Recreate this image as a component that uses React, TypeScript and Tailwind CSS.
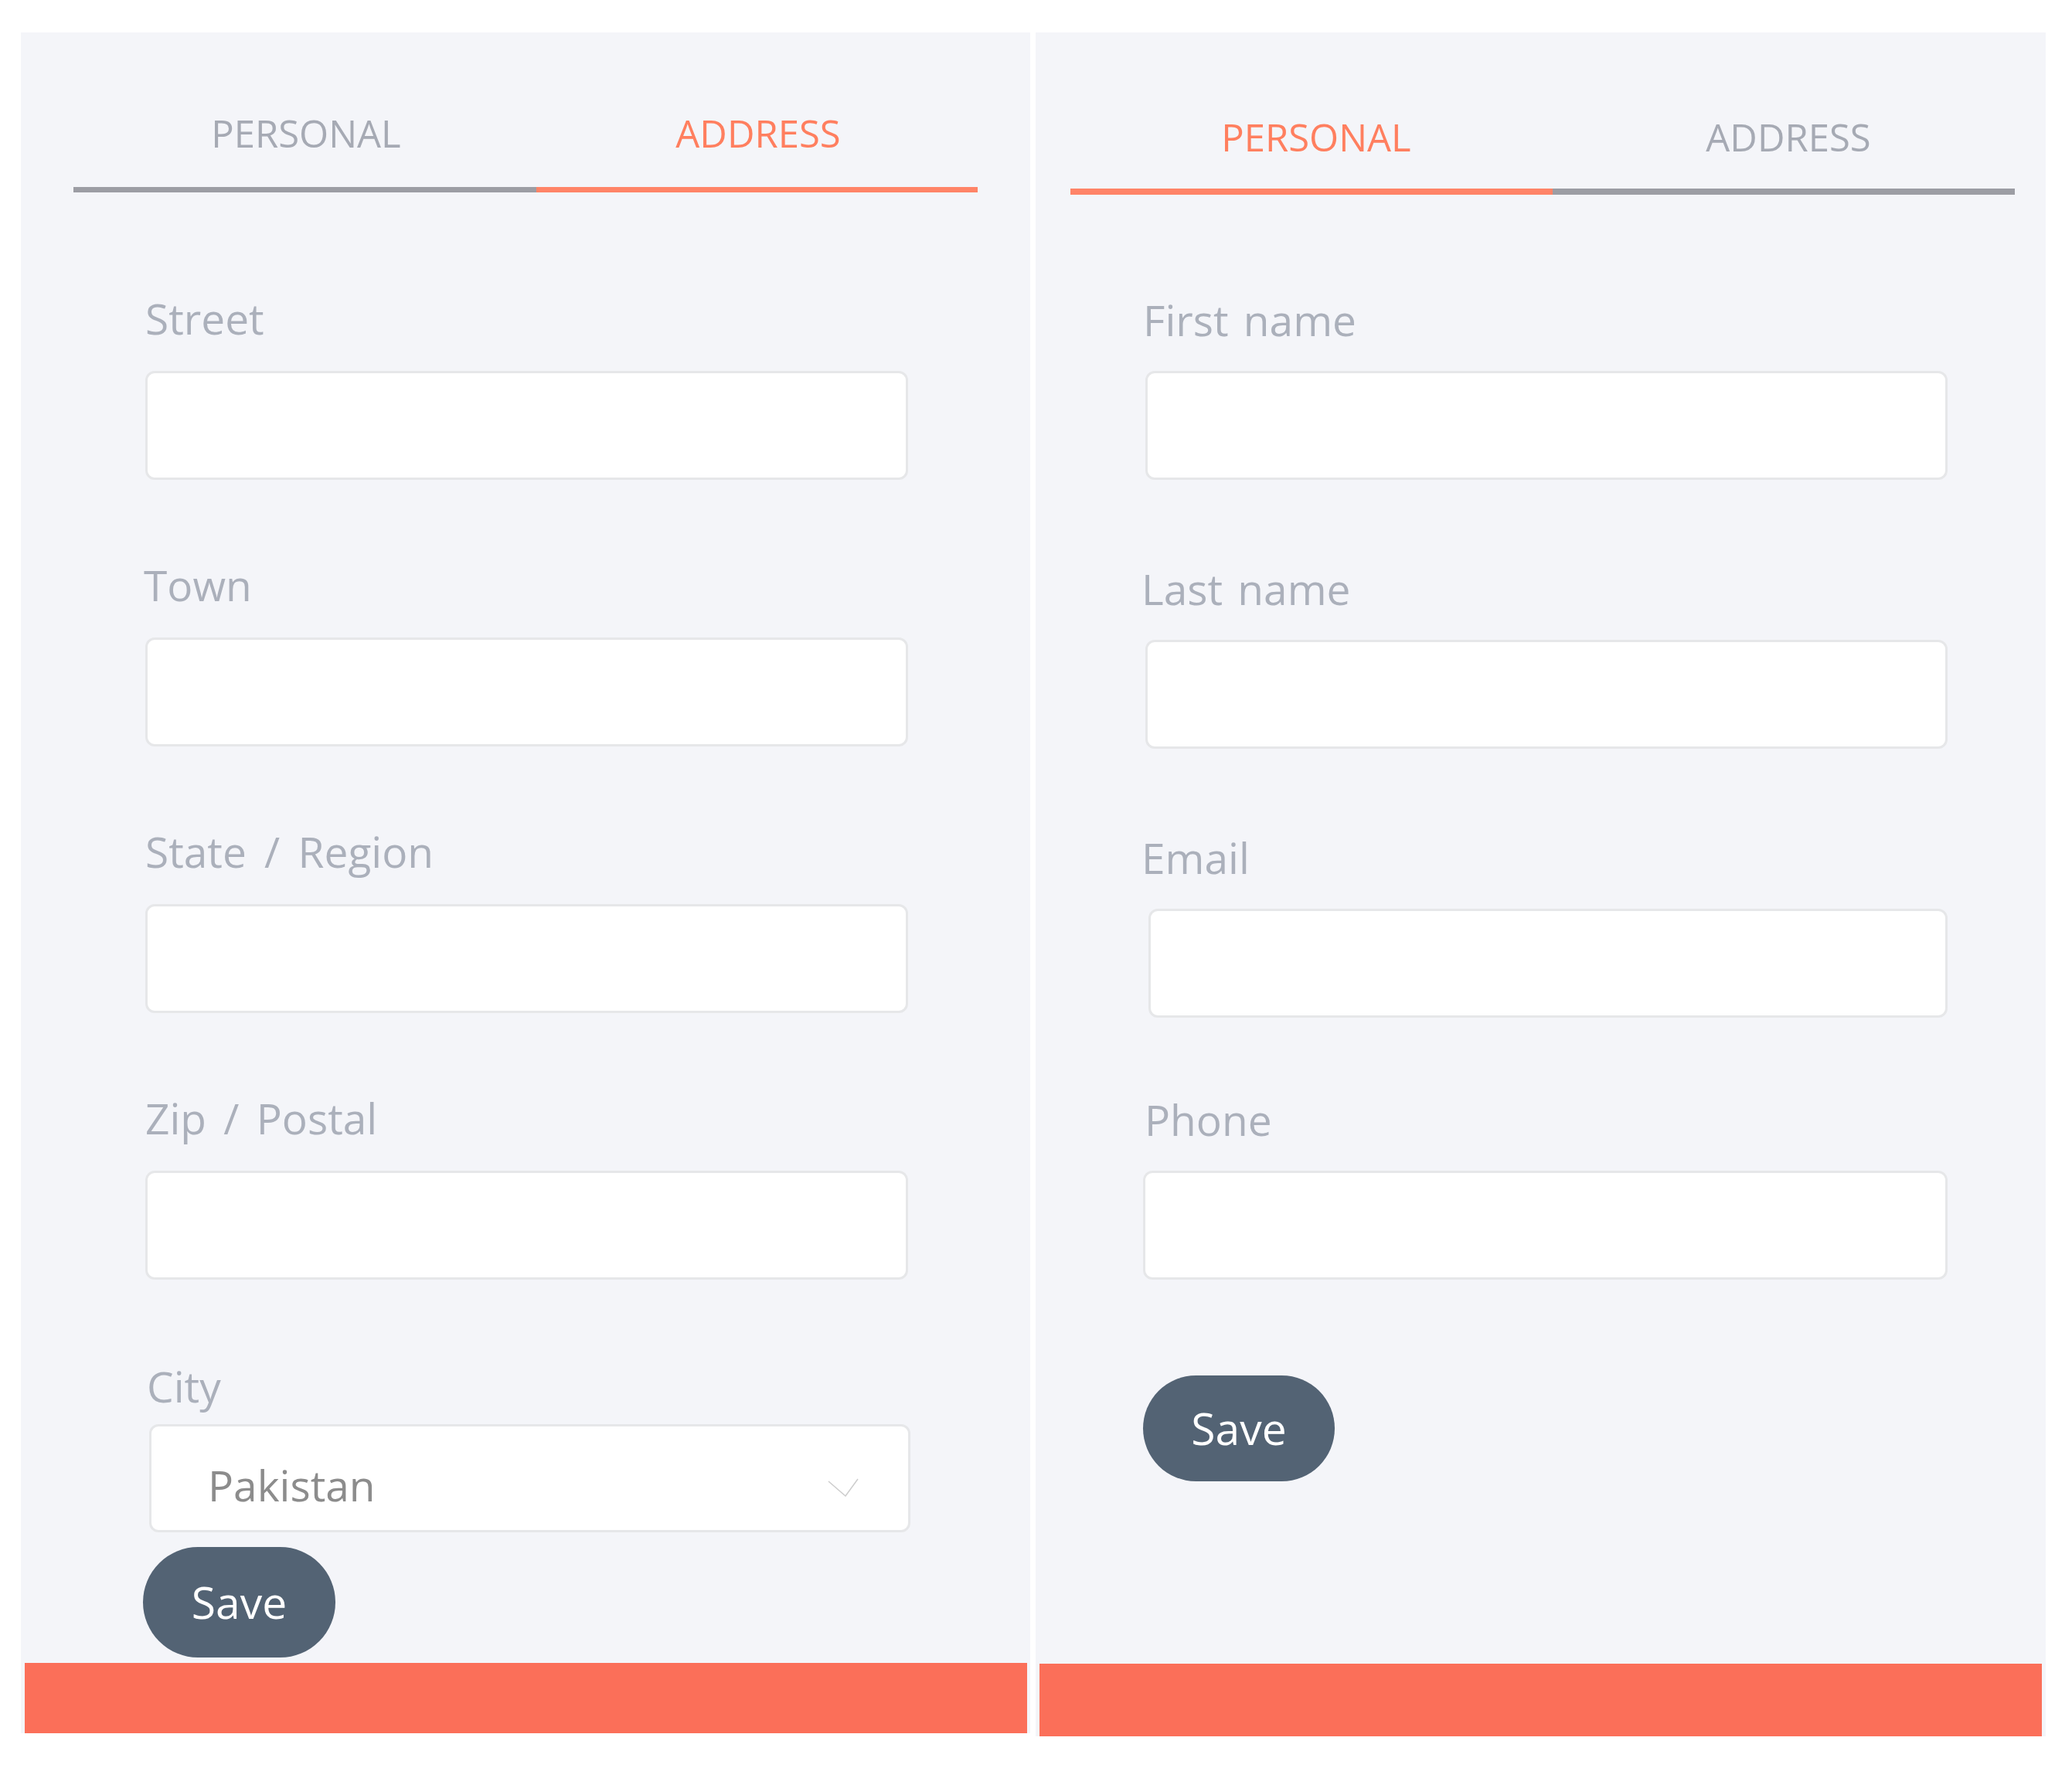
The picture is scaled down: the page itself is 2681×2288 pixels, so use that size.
import React from "react";

const font = { fontFamily: '"Open Sans", "Noto Sans", sans-serif' };

function Label({ text, className = "" }: { text: string; className?: string }) {
  return (
    <div
      className={"text-[55px] leading-none text-[#abb0bb] whitespace-nowrap [word-spacing:5px] " + className}
    >
      {text}
    </div>
  );
}

function Input({ className = "" }: { className?: string }) {
  return (
    <div
      className={
        "h-[141px] bg-white border-[3px] border-[#e6e7e9] rounded-[12px] " + className
      }
    />
  );
}

function Tab({ label, on, className }: { label: string; on: boolean; className: string }) {
  return (
    <div
      className={
        "text-center text-[49px] leading-none " +
        className +
        " " +
        (on ? "text-[#ff7f5f] border-[#ff8468]" : "text-[#a6aab4] border-[#9c9da4]")
      }
    >
      {label}
    </div>
  );
}

function SaveButton({ className = "" }: { className?: string }) {
  return (
    <button
      className={
        "flex items-center justify-center rounded-full bg-[#536374] text-white text-[57px] leading-none " +
        className
      }
      style={font}
    >
      Save
    </button>
  );
}

function AddressPanel() {
  return (
    <div className="w-[1306px] h-[2201px] bg-[#f4f5f9] flex flex-col">
      <div className="flex pt-[106px] pl-[68px]">
        <Tab label="PERSONAL" on={false} className="w-[599px] pl-[3px] pb-[45px] border-b-[7px]" />
        <Tab label="ADDRESS" on={true} className="w-[571px] pl-[3px] pb-[45px] border-b-[7px]" />
      </div>
      <div className="pl-[161px] pr-[158px] pt-[135px] flex flex-col">
        <Label text="Street" />
        <Input className="mt-[41px]" />
        <Label text="Town" className="mt-[108px] -ml-[2px]" />
        <Input className="mt-[41px]" />
        <Label text="State / Region" className="mt-[108px] [word-spacing:9px]" />
        <Input className="mt-[41px]" />
        <Label text="Zip / Postal" className="mt-[108px] [word-spacing:8px]" />
        <Input className="mt-[41px]" />
        <Label text="City" className="mt-[110px] ml-[2px]" />
        <div className="mt-[22px] ml-[5px] -mr-[3px] h-[140px] bg-white border-[3px] border-[#e6e7e9] rounded-[12px] flex items-center justify-between pl-[73px] pr-[64px] pt-[16px]">
          <span className="text-[55px] leading-none text-[#8c8c8c]">Pakistan</span>
          <svg width="40" height="24" viewBox="0 0 40 24" fill="none" className="mt-[8px]">
            <polyline points="1,4 23,23 39,1" stroke="#cdcdcd" strokeWidth="1.5" fill="none" />
          </svg>
        </div>
        <SaveButton className="mt-[19px] -ml-[3px] w-[249px] h-[143px]" />
      </div>
      <div className="mt-auto ml-[5px] mr-[4px] h-[91px] bg-[#fb6f59]" />
    </div>
  );
}

function PersonalPanel() {
  return (
    <div className="w-[1307px] h-[2205px] bg-[#f4f5f9] flex flex-col">
      <div className="flex pt-[111px] pl-[45px]">
        <Tab label="PERSONAL" on={true} className="w-[624px] pl-[12px] pb-[42px] border-b-[8px]" />
        <Tab label="ADDRESS" on={false} className="w-[598px] pl-[12px] pb-[42px] border-b-[8px]" />
      </div>
      <div className="pl-[142px] pr-[127px] pt-[134px] flex flex-col">
        <Label text="First name" className="-ml-[3px]" />
        <Input className="mt-[39px]" />
        <Label text="Last name" className="mt-[113px] -ml-[5px]" />
        <Input className="mt-[39px]" />
        <Label text="Email" className="mt-[113px] -ml-[5px]" />
        <Input className="mt-[39px] ml-[4px]" />
        <Label text="Phone" className="mt-[104px] -ml-[1px]" />
        <Input className="mt-[39px] -ml-[3px]" />
        <SaveButton className="mt-[124px] -ml-[3px] w-[248px] h-[137px]" />
      </div>
      <div className="mt-auto ml-[5px] mr-[5px] h-[94px] bg-[#fb6f59]" />
    </div>
  );
}

export default function App() {
  return (
    <div className="w-[2681px] h-[2288px] bg-white flex items-start pt-[42px] pl-[27px] gap-[7px]" style={font}>
      <AddressPanel />
      <PersonalPanel />
    </div>
  );
}
